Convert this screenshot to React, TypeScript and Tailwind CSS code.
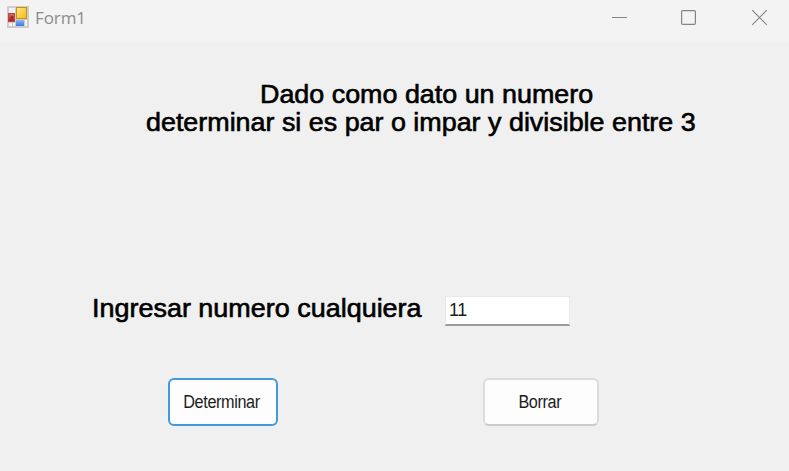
function FormIcon() {
  return (
    <svg width="22" height="22" viewBox="0 0 22 22" className="block">
      <defs>
        <linearGradient id="gold" x1="0" y1="0" x2="1" y2="1">
          <stop offset="0" stopColor="#ffe98a" />
          <stop offset="1" stopColor="#f3b90e" />
        </linearGradient>
        <linearGradient id="red" x1="0" y1="0" x2="0" y2="1">
          <stop offset="0" stopColor="#dd6a5c" />
          <stop offset="1" stopColor="#a91c12" />
        </linearGradient>
        <linearGradient id="blue" x1="0" y1="0" x2="0" y2="1">
          <stop offset="0" stopColor="#8db8f5" />
          <stop offset="1" stopColor="#3d76dc" />
        </linearGradient>
      </defs>
      <rect width="22" height="22" fill="#cdcdcd" />
      <rect x="2" y="2" width="6" height="5" fill="#f1f1f1" />
      <rect x="2" y="17" width="3" height="3" fill="#f4f4f4" />
      <rect x="6" y="17" width="2" height="3" fill="#f4f4f4" />
      <rect x="18" y="14" width="2" height="6" fill="#f1f1f1" />
      <rect x="9.5" y="1.5" width="10" height="11" fill="url(#gold)" stroke="#c89214" />
      <rect x="1.5" y="7.5" width="6" height="8" fill="url(#red)" stroke="#b9473b" />
      <rect x="4" y="10" width="2" height="3" fill="#9c2a20" />
      <rect x="9" y="14" width="8" height="6" fill="url(#blue)" />
    </svg>
  );
}

function WindowControls() {
  return (
    <svg width="160" height="20" viewBox="0 0 160 20" fill="none" stroke="#858585" className="block">
      <path d="M2 9.5H17" />
      <rect x="71.6" y="2.6" width="13.8" height="13.8" rx="1.2" strokeWidth="1.2" />
      <path d="M142.2 2.2L156.8 16.8M156.8 2.2L142.2 16.8" strokeWidth="1.2" />
    </svg>
  );
}

export default function App() {
  return (
    <div className="flex h-[471px] w-[789px] flex-col overflow-hidden bg-[#f0f0f0] font-['Liberation_Sans',sans-serif] text-black">
      <header className="flex h-[42px] shrink-0 items-start bg-[#f3f3f3] pl-[7px] pt-1.5">
        <FormIcon />
        <span className="ml-1.5 mt-px font-['Open_Sans',sans-serif] text-[17px] leading-[22px] tracking-[-0.1px] text-[#8c8c8c]">
          Form1
        </span>
        <div className="ml-auto mr-[19px] mt-0.5">
          <WindowControls />
        </div>
      </header>
      <main className="flex flex-1 flex-col">
        <h1 className="mt-[38px] flex flex-col items-start whitespace-nowrap text-[25px] leading-[28px] [-webkit-text-stroke:0.6px_black]">
          <span className="ml-[260px] origin-left scale-x-[1.075]">Dado como dato un numero</span>
          <span className="ml-[146px] origin-left scale-x-[1.075]">
            determinar si es par o impar y divisible entre 3
          </span>
        </h1>
        <div className="mt-[159px] flex h-[31px] items-start pl-[92px]">
          <label
            htmlFor="numero"
            className="-mt-px w-[353px] whitespace-nowrap text-[25px] leading-[28px] [-webkit-text-stroke:0.6px_black]"
          >
            <span className="inline-block origin-left scale-x-[1.078]">Ingresar numero cualquiera</span>
          </label>
          <input
            id="numero"
            defaultValue="11"
            className="mt-px h-[30px] w-[125px] border border-b-2 border-[#e9e9e9] border-b-[#9a9a9a] bg-white pl-[3px] text-[18px] tracking-[-0.5px] text-[#1c1c1c] outline-none"
          />
        </div>
        <div className="mt-[52px] flex items-start pl-[168px]">
          <button className="h-[48px] w-[110px] rounded-[6px] border-2 border-[#4399da] bg-[#fdfdfd] pr-[3px] text-[18px] tracking-[-0.4px] text-[#1c1c1c]">
            <span className="inline-block scale-x-[0.9]">Determinar</span>
          </button>
          <button className="ml-[205px] h-[48px] w-[116px] rounded-[6px] border-2 border-[#dcdcdc] border-b-[#cbcbcb] bg-[#fdfdfd] pr-0.5 text-[18px] tracking-[-0.4px] text-[#1c1c1c]">
            <span className="inline-block scale-x-[0.9]">Borrar</span>
          </button>
        </div>
      </main>
    </div>
  );
}
